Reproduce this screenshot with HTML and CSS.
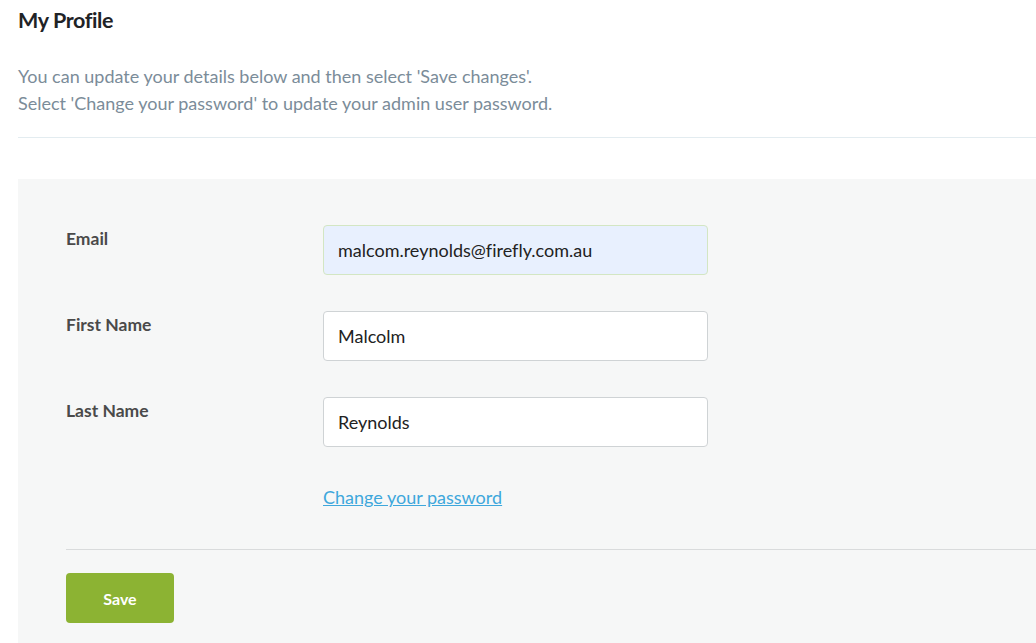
FILE: index.html
```html
<!DOCTYPE html>
<html>
<head>
<meta charset="utf-8">
<link rel="stylesheet" href="styles.css">
</head>
<body>
<div class="page">
  <h1 class="title">My Profile</h1>
  <p class="intro">You can update your details below and then select 'Save changes'.<br>Select 'Change your password' to update your admin user password.</p>
  <hr class="divider">
  <form class="panel">
    <div class="row">
      <label class="label">Email</label>
      <div class="field autofill">malcom.reynolds@firefly.com.au</div>
    </div>
    <div class="row">
      <label class="label">First Name</label>
      <div class="field">Malcolm</div>
    </div>
    <div class="row">
      <label class="label">Last Name</label>
      <div class="field">Reynolds</div>
    </div>
    <div class="link-row"><a class="link" href="#">Change your password</a></div>
    <hr class="panel-divider">
    <button class="save" type="button">Save</button>
  </form>
</div>
</body>
</html>
```

FILE: styles.css
```css
html, body {
  margin: 0;
  padding: 0;
  background: #ffffff;
  font-family: "Lato", "Noto Sans", sans-serif;
  font-variant-ligatures: none;
  overflow: hidden;
}
.page {
  padding-left: 18px;
}
.title {
  margin: 0;
  padding-top: 6px;
  font-size: 21.5px;
  font-weight: 700;
  color: #1f2326;
  letter-spacing: -0.4px;
  line-height: 28px;
}
.intro {
  margin: 0;
  padding-top: 29px;
  font-size: 18px;
  line-height: 27px;
  color: #7b8c99;
}
.divider {
  margin: 20px 0 0 0;
  border: 0;
  border-top: 1px solid #e3ecf0;
}
.panel {
  box-sizing: border-box;
  margin-top: 41px;
  background: #f6f7f7;
  padding: 46px 0 20px 48px;
  height: 464px;
}
.row {
  display: flex;
  align-items: flex-start;
  margin-bottom: 36px;
}
.label {
  width: 257px;
  font-size: 17.5px;
  font-weight: 700;
  color: #4a4a4a;
  padding-top: 3px;
}
.field {
  box-sizing: border-box;
  width: 385px;
  height: 50px;
  background: #ffffff;
  border: 1px solid #cfd3d5;
  border-radius: 4px;
  padding: 0 14px;
  display: flex;
  align-items: center;
  font-size: 18px;
  color: #222;
}
.field.autofill {
  background: #e8f0fe;
  border-color: #d3e6c3;
}
.link-row {
  padding: 3px 0 0 257px;
}
.link {
  font-size: 18px;
  color: #3ea7dc;
  text-decoration: underline;
}
.panel-divider {
  margin: 41px 0 0 0;
  border: 0;
  border-top: 1px solid #d9dbdc;
}
.save {
  margin-top: 23px;
  width: 108px;
  height: 50px;
  background: #8cb333;
  border: 0;
  border-radius: 4px;
  color: #ffffff;
  font-family: "Lato", "Noto Sans", sans-serif;
  font-size: 16px;
  font-weight: 700;
}
```
